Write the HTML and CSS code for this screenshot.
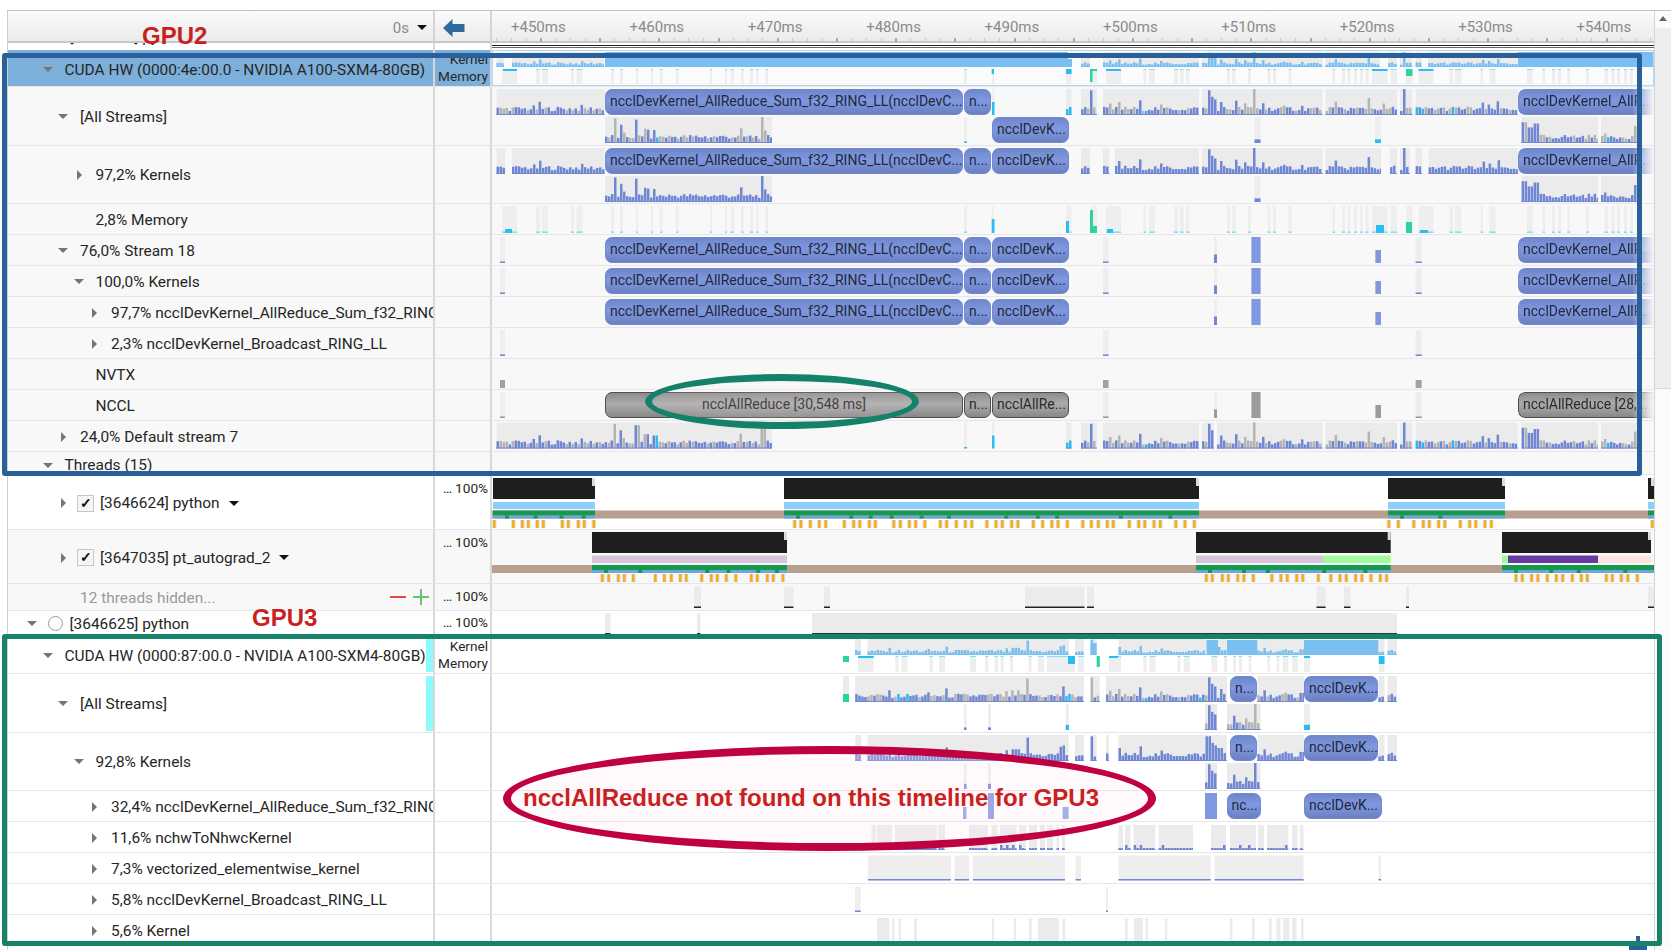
FILE: index.html
```html
<!DOCTYPE html>
<html lang="en">
<head>
    <meta charset="UTF-8">
    <title>Timeline</title>
    <link rel="stylesheet" href="styles.css">
</head>
<body>
    <div class="profiler">
        <div class="timeline">
            <div class="header">
                <div class="head-label">0s <i class="caret"></i></div>
                <div class="head-back">
                    <svg width="22" height="18" viewBox="0 0 22 18"><path d="M0 9 L9.5 0 V5 H21.5 V13 H9.5 V18 Z" fill="#2f6b9f"/></svg>
                </div>
                <div class="ruler">
                    <span>+450ms</span><span>+460ms</span><span>+470ms</span><span>+480ms</span><span>+490ms</span>
                    <span>+500ms</span><span>+510ms</span><span>+520ms</span><span>+530ms</span><span>+540ms</span>
                </div>
            </div>

            <div class="row row-peek">
                <div class="label lvl-root"><i class="tw down"></i><i class="radio"></i><span class="peek-text">[3646624] python</span></div>
                <div class="unit"></div>
                <div class="track"></div>
            </div>

            <div class="row row-device row-selected">
                <div class="label lvl-0"><i class="tw down"></i>CUDA HW (0000:4e:00.0 - NVIDIA A100-SXM4-80GB)</div>
                <div class="unit unit-two">Kernel<br>Memory</div>
                <div class="track" data-t="hw2"></div>
            </div>
            <div class="row row-tall">
                <div class="label lvl-1"><i class="tw down"></i>[All Streams]</div>
                <div class="unit"></div>
                <div class="track" data-t="all2"></div>
            </div>
            <div class="row row-tall">
                <div class="label lvl-2"><i class="tw right"></i>97,2% Kernels</div>
                <div class="unit"></div>
                <div class="track" data-t="kern2"></div>
            </div>
            <div class="row">
                <div class="label lvl-2"><i class="tw"></i>2,8% Memory</div>
                <div class="unit"></div>
                <div class="track" data-t="mem2"></div>
            </div>
            <div class="row">
                <div class="label lvl-1"><i class="tw down"></i>76,0% Stream 18</div>
                <div class="unit"></div>
                <div class="track" data-t="stream"></div>
            </div>
            <div class="row">
                <div class="label lvl-2"><i class="tw down"></i>100,0% Kernels</div>
                <div class="unit"></div>
                <div class="track" data-t="stream"></div>
            </div>
            <div class="row">
                <div class="label lvl-3"><i class="tw right"></i>97,7% ncclDevKernel_AllReduce_Sum_f32_RING_LL</div>
                <div class="unit"></div>
                <div class="track" data-t="reduce"></div>
            </div>
            <div class="row">
                <div class="label lvl-3"><i class="tw right"></i>2,3% ncclDevKernel_Broadcast_RING_LL</div>
                <div class="unit"></div>
                <div class="track" data-t="bcast"></div>
            </div>
            <div class="row">
                <div class="label lvl-2"><i class="tw"></i>NVTX</div>
                <div class="unit"></div>
                <div class="track" data-t="nvtx"></div>
            </div>
            <div class="row">
                <div class="label lvl-2"><i class="tw"></i>NCCL</div>
                <div class="unit"></div>
                <div class="track" data-t="nccl"></div>
            </div>
            <div class="row">
                <div class="label lvl-1"><i class="tw right"></i>24,0% Default stream 7</div>
                <div class="unit"></div>
                <div class="track" data-t="default"></div>
            </div>
            <div class="row row-threads">
                <div class="label lvl-0"><i class="tw down"></i>Threads (15)</div>
                <div class="unit"></div>
                <div class="track"></div>
            </div>

            <div class="row row-thread row-white">
                <div class="label lvl-1"><i class="tw right"></i><i class="check">&#10003;</i>[3646624] python <i class="caret caret-row"></i></div>
                <div class="unit unit-top"><span class="dots">...</span> 100%</div>
                <div class="track" data-t="python"></div>
            </div>
            <div class="row row-thread2">
                <div class="label lvl-1"><i class="tw right"></i><i class="check">&#10003;</i>[3647035] pt_autograd_2 <i class="caret caret-row"></i></div>
                <div class="unit unit-top unit-tight"><span class="dots">...</span> 100%</div>
                <div class="track" data-t="autograd"></div>
            </div>
            <div class="row row-hidden">
                <div class="label lvl-1"><i class="tw"></i><span class="muted">12 threads hidden...</span>
                    <span class="signs"><i class="sign sign-minus"></i><i class="sign sign-plus"></i></span>
                </div>
                <div class="unit unit-top unit-tight"><span class="dots">...</span> 100%</div>
                <div class="track" data-t="hidden"></div>
            </div>
            <div class="row row-process row-white">
                <div class="label lvl-root"><i class="tw down"></i><i class="radio"></i>[3646625] python</div>
                <div class="unit unit-top unit-tighter"><span class="dots">...</span> 100%</div>
                <div class="track" data-t="proc"></div>
            </div>

            <div class="row row-device row-white">
                <div class="label lvl-0 marked"><i class="tw down"></i>CUDA HW (0000:87:00.0 - NVIDIA A100-SXM4-80GB)</div>
                <div class="unit unit-two">Kernel<br>Memory</div>
                <div class="track" data-t="hw3"></div>
            </div>
            <div class="row row-tall row-white">
                <div class="label lvl-1 marked"><i class="tw down"></i>[All Streams]</div>
                <div class="unit"></div>
                <div class="track" data-t="all3"></div>
            </div>
            <div class="row row-tall row-white">
                <div class="label lvl-2"><i class="tw down"></i>92,8% Kernels</div>
                <div class="unit"></div>
                <div class="track" data-t="kern3"></div>
            </div>
            <div class="row row-white">
                <div class="label lvl-3"><i class="tw right"></i>32,4% ncclDevKernel_AllReduce_Sum_f32_RING_LL</div>
                <div class="unit"></div>
                <div class="track" data-t="reduce3"></div>
            </div>
            <div class="row row-white">
                <div class="label lvl-3"><i class="tw right"></i>11,6% nchwToNhwcKernel</div>
                <div class="unit"></div>
                <div class="track" data-t="nchw"></div>
            </div>
            <div class="row row-white">
                <div class="label lvl-3"><i class="tw right"></i>7,3% vectorized_elementwise_kernel</div>
                <div class="unit"></div>
                <div class="track" data-t="vect"></div>
            </div>
            <div class="row row-white">
                <div class="label lvl-3"><i class="tw right"></i>5,8% ncclDevKernel_Broadcast_RING_LL</div>
                <div class="unit"></div>
                <div class="track" data-t="bcast3"></div>
            </div>
            <div class="row row-white">
                <div class="label lvl-3"><i class="tw right"></i>5,6% Kernel</div>
                <div class="unit"></div>
                <div class="track" data-t="kernel3"></div>
            </div>
        </div>
        <div class="scrollbar">
            <i class="scroll-up"></i>
            <div class="scroll-thumb"></div>
        </div>
    </div>

    <svg class="pin" width="18" height="14" viewBox="0 0 18 14"><path d="M7 0 H11 V9 H18 V14 H0 V9 H7 Z" fill="#2a6099"/></svg>
    <div class="note note-gpu2">GPU2</div>
    <div class="note note-gpu3">GPU3</div>
    <div class="box box-blue"></div>
    <div class="box box-green"></div>
    <div class="ring ring-green"></div>
    <div class="ring ring-red"><span class="ring-text">ncclAllReduce not found on this timeline for GPU3</span></div>

    <script src="script.js"></script>
</body>
</html>
```

FILE: styles.css
```css
* { box-sizing: border-box; }
html, body { margin: 0; height: 950px; overflow: hidden; background: #fff; }
body { font-family: Roboto, "Liberation Sans", sans-serif; font-size: 15.45px; color: #262626; }
i { font-style: normal; }

.profiler { display: flex; margin: 10px 0 0 7px; width: 1664px; height: 940px; border-top: 1px solid #c4c4c4; }
.timeline { width: 1647px; flex: none; border-left: 1px solid #cfcfcf; overflow: hidden; }

.header { display: grid; grid-template-columns: 427px 57px 1fr; height: 32px; background: linear-gradient(#fbfbfb, #ebebeb); border-bottom: 2px solid #c8c8c8; }
.head-label { display: flex; align-items: center; justify-content: flex-end; gap: 8px; padding-right: 6px; color: #8a8a8a; font-size: 15px; border-right: 2px solid #d4d4d4; }
.head-back { display: flex; align-items: center; padding-left: 8px; border-right: 2px solid #d4d4d4; }
.ruler {
    display: flex; padding-left: 19px; color: #8a8a8a; font-size: 15px; line-height: 33px;
    background:
        repeating-linear-gradient(90deg, #a8a8a8 0 2px, transparent 2px 59.2px) 48px 27px / 100% 4px no-repeat,
        repeating-linear-gradient(90deg, #c8c8c8 0 1px, transparent 1px 14.8px) 4px 27px / 100% 3px no-repeat;
}
.ruler span { width: 118.4px; flex: none; }

.caret { display: inline-block; width: 0; height: 0; border: 5px solid transparent; border-top: 5.5px solid #111; border-bottom: 0; }
.caret-row { margin-left: 9px; vertical-align: 1px; }

.row { display: grid; grid-template-columns: 427px 57px 1fr; height: 31px; background: #f8f8f8; border-bottom: 1px solid #e6e6e6; }
.row-white { background: #fff; }
.row-tall { height: 58.5px; }
.row-device { height: 37px; }
.row-threads { height: 23px; overflow: hidden; }
.row-thread { height: 55px; }
.row-thread2 { height: 54px; }
.row-hidden { height: 27px; }
.row-process { height: 26px; }
.row-peek { height: 7px; overflow: hidden; background: #fff; border-bottom: 0; }

.label { position: relative; display: flex; align-items: center; padding-top: 2px; white-space: nowrap; overflow: hidden; border-right: 2px solid #d8d8d8; }
.lvl-root { padding-left: 19px; }
.lvl-0 { padding-left: 35px; }
.lvl-1 { padding-left: 50.5px; }
.lvl-2 { padding-left: 66px; }
.lvl-3 { padding-left: 81.5px; }
.row-selected .label { padding-top: 4px; }
.row-process .label { padding-top: 0; }
.row-threads .label { align-items: flex-start; padding-top: 4px; }
.row-threads .tw { margin-top: 5px; }

.tw { flex: none; position: relative; width: 21.5px; height: 10px; }
.tw.down::before { content: ""; position: absolute; left: -0.5px; top: 2px; border: 5px solid transparent; border-top: 5.5px solid #757575; border-bottom: 0; }
.tw.right::before { content: ""; position: absolute; left: 2.5px; top: 0; border: 5px solid transparent; border-left: 5.5px solid #757575; border-right: 0; }

.check { flex: none; width: 17px; height: 17px; margin-right: 6px; margin-left: -3px; background: #f6f6f6; border: 1px solid #c6c6c6; color: #111; font-size: 14px; font-weight: 700; line-height: 15px; text-align: center; }
.radio { flex: none; width: 15px; height: 15px; margin-right: 7px; border: 1.5px solid #999; border-radius: 50%; background: #fff; margin-left: -1px; }
.muted { color: #9a9a9a; }
.signs { position: absolute; left: 382px; top: 12px; display: flex; gap: 7px; }
.sign { position: relative; display: block; width: 16px; height: 2px; background: #e04a44; }
.sign-plus { background: #6cc26c; }
.sign-plus::after { content: ""; position: absolute; left: 7px; top: -7px; width: 2px; height: 16px; background: #6cc26c; }
.row-peek .label { align-items: flex-start; padding-top: 0; }
.row-peek .tw, .row-peek .radio, .row-peek .peek-text { margin-top: -15px; }

.unit { border-right: 2px solid #d8d8d8; font-size: 13.6px; text-align: right; padding-right: 2px; white-space: nowrap; }
.dots { letter-spacing: -0.7px; }
.unit-top { padding-top: 5px; line-height: 17px; }
.unit-tight { padding-top: 4px; }
.unit-tighter { padding-top: 3px; }
.unit-two { line-height: 16.5px; padding-top: 1px; }

.row-selected .label, .row-selected .unit { background: #7cafd9; }
.row-selected .track { outline: 1px solid #b6d5f2; outline-offset: -1px; background: #fbfbfb; }

.marked::after { content: ""; position: absolute; right: 0; top: 2px; bottom: 1px; width: 7px; background: #8dfbfb; }

.track { position: relative; overflow: hidden; }
.row-peek .track { border-top: 1px solid #222; margin-top: 2px; height: 3px; border-bottom: 1px solid #666; }
.track svg { position: absolute; left: 0; top: 0; width: 100%; height: 100%; }

.chip {
    position: absolute; display: block; height: 26px; padding: 0 4px; font-size: 14px; line-height: 23px; white-space: nowrap; overflow: hidden;
    color: #23283a; background: linear-gradient(#6f86ca, #7f98e0 45%, #6b80c2); border: 1px solid #7189cf; border-radius: 7px;
}
.chip-grey { background: linear-gradient(#8c8c8c, #ababab 45%, #888); border-color: #4e4e4e; color: #2a2a2a; }
.chip-center { text-align: center; }
.chip-fade { border-right: 0; border-radius: 7px 0 0 7px; -webkit-mask-image: linear-gradient(90deg, #000 84%, transparent); mask-image: linear-gradient(90deg, #000 84%, transparent); }

.scrollbar { position: relative; flex: 1; background: #fbfbfb; border-left: 1px solid #d4d4d4; }
.scroll-up { position: absolute; left: 4px; top: 5px; border: 4.5px solid transparent; border-bottom: 5px solid #666; border-top: 0; }
.scroll-thumb { position: absolute; left: 0; right: 0; top: 17px; height: 361px; background: #ededed; border-bottom: 1px solid #d8d8d8; }

.note { position: absolute; color: #c9211e; font-family: "Liberation Sans", sans-serif; font-weight: 700; font-size: 24px; line-height: 28px; }
.note-gpu2 { left: 142px; top: 22px; }
.note-gpu3 { left: 252px; top: 604px; }

.box { position: absolute; border-style: solid; border-width: 5.5px; border-radius: 3px; }
.box-blue { left: 2px; top: 53px; width: 1640px; height: 423px; border-color: #2a6099; }
.box-green { left: 2px; top: 634px; width: 1660px; height: 312px; border-color: #17826a; }

.ring { position: absolute; border-style: solid; border-radius: 50%; }
.ring-green { left: 645px; top: 374px; width: 274px; height: 55px; border-width: 7px; border-color: #14826a; background: rgba(255, 235, 235, .12); }
.ring-red { left: 503px; top: 746px; width: 653px; height: 105px; border-width: 8px; border-color: #bf0041; background: rgba(255, 228, 236, .22); }
.ring-text { position: absolute; left: 12px; top: 29px; color: #c9211e; font-family: "Liberation Sans", sans-serif; font-weight: 700; font-size: 24px; line-height: 30px; white-space: nowrap; }
.pin { position: absolute; left: 1629px; top: 936px; }
```

FILE: script.js
```js
// draws the timeline tracks, all x values are page pixels
const X0 = 492;
const NS = 'http://www.w3.org/2000/svg';
const BLUE = '#7088d4', GREY = '#b4b4b4', CYAN = '#2bbdf2', SKY = '#79bff2', TEAL = '#2bd3a4', BLOCK = '#ebebeb', TICK = '#86dff0';

// tall peaks seen in the histograms
const SPIKES = {615: .95, 620: .7, 637: .9, 646: .55, 655: .5, 763: 1, 1090: .95, 1255: 1, 1369: .65, 1404: 1, 1524: .8, 1530: .6, 1536: .75, 1220: .5, 1216: .6, 1264: .45, 1634: .65, 1100: .6, 1118: .5, 1208: .95, 1212: .7, 1235: .55, 1245: .45, 1302: .35, 1027: .9, 1062: .55, 1063: .6, 1017: .45};

function rnd(n) {
    let s = Math.sin(n * 12.9898) * 43758.5453;
    return s - Math.floor(s);
}

function rect(t, x0, x1, y, h, fill) {
    let r = document.createElementNS(NS, 'rect');
    r.setAttribute('x', x0 - X0);
    r.setAttribute('y', y);
    r.setAttribute('width', x1 - x0);
    r.setAttribute('height', h);
    r.setAttribute('fill', fill);
    t.svg.appendChild(r);
}

function barColor(kind, x) {
    if (kind == 'kernel' || kind == 'low') return BLUE;
    if (kind == 'light') return SKY;
    let c = rnd(x * 3.1);
    if (c < .38) return GREY;
    if (c < .42) return CYAN;
    return BLUE;
}

// grey block with a little histogram in it
function hist(t, x0, x1, y, h, kind) {
    rect(t, x0, x1, y, h, BLOCK);
    for (let x = x0; x < x1 - 1; x += 3) {
        let key = Math.round(x / 3);
        let r = rnd(key);
        let f = .15 + .18 * r;
        if (r > .93) f = .35 + .22 * rnd(key + 7);
        if (kind == 'low') {
            f = r > .85 ? .2 : .08;
        } else {
            for (let s in SPIKES) {
                if (Math.abs(x + 1 - s) < 1.6) f = SPIKES[s];
            }
        }
        rect(t, x, Math.min(x + 2.5, x1), y + h - f * h, f * h, barColor(kind, key));
    }
    rect(t, x0, x1, y + h - 1, 1, kind == 'light' ? SKY : BLUE);
}

function hists(t, list, y, h, kind) {
    list.forEach(b => hist(t, b[0], b[1], y, h, kind));
}

// thin empty block, with a small coloured part at the bottom
function stubs(t, list, y, h, color, part) {
    list.forEach(b => {
        rect(t, b[0], b[1], y, h, '#eeeeee');
        rect(t, b[0], b[1], y + h * (1 - part), h * part, color);
    });
}

function solid(t, list, y, h, color) {
    list.forEach(b => rect(t, b[0], b[1], y, h, color));
}

function chip(t, x0, x1, y, text, cls) {
    let c = document.createElement('span');
    c.className = 'chip ' + (cls || '');
    c.style.left = (x0 - X0) + 'px';
    c.style.top = y + 'px';
    c.style.width = (x1 - x0) + 'px';
    c.textContent = text;
    t.el.appendChild(c);
}

const LONG = 'ncclDevKernel_AllReduce_Sum_f32_RING_LL(ncclDevC...';
const CUT = 'ncclDevKernel_AllR...';
const SHORT = 'ncclDevK...';

function blueChips(t, y) {
    chip(t, 605, 963, y, LONG);
    chip(t, 964, 991, y, 'n...', 'chip-center');
    chip(t, 992, 1069, y, SHORT);
    chip(t, 1518, 1654, y, CUT, 'chip-fade');
}

const MEM2 = [[502,517],[536,540],[542,548],[571,574],[576.5,582.5],[611,614],[620,623],[636,638],[651,653],[660,662.5],[676,678.6],[710,712],[725,727],[730.7,734],[741,743.7],[750,753],[756,758.6],[765.5,768],[964,967],[991.7,994],[1066,1071.6],
    [1090,1097],[1106,1121],[1143.5,1146],[1149,1155],[1174,1178],[1180,1183.7],[1186,1189.4],[1227,1230],[1232,1235.7],[1248,1251],[1267.5,1270.5],[1273,1276],[1288.5,1291.6],[1332.5,1335],[1342,1345],[1347.5,1350.5],[1354,1357],[1360,1363],[1365.5,1368.5],[1372,1387.6],[1390.7,1397],[1406,1412.5],[1418.6,1433.5],[1449.6,1453],[1455,1461.5],[1480.6,1483],[1489.4,1495.6],
    [1527,1532.7],[1542.6,1545],[1552,1555],[1558,1561],[1567.5,1570],[1586,1589],[1604.6,1608],[1611.5,1614.6],[1617,1620],[1624,1627],[1630,1633]];

const HW2_UP = [[496.5,504],[512,604],[1081,1090],[1103,1199],[1202,1322.6],[1325.6,1380],[1388,1397],[1400,1412.5],[1415.6,1422],[1428,1517.8]];
const ALL2_L1 = [[496.5,604.5],[1081,1097],[1103,1199],[1202,1322.6],[1325.6,1397],[1400,1412.5],[1415.6,1517.8]];
const KERN2_L1 = [[496.5,505],[512,604.5],[1081,1090],[1103,1109.4],[1115,1199],[1202,1322.6],[1325.6,1381],[1390,1397],[1400,1410],[1415.6,1422],[1428.6,1517.8]];
const RIGHT_L2 = [[1521.6,1598],[1601,1637]];

function orangeTicks(t, list, y) {
    list.forEach(x => {
        rect(t, x - 1, x + 3.6, y, 8, '#e3e3e3');
        rect(t, x, x + 2.6, y, 8, '#f6ad1e');
    });
}

function threadBand(t, x0, x1, y) {
    rect(t, x0, x1, y, 5, '#15994f');
    rect(t, x0, x1, y + 5, 3, '#6ea6d8');
    for (let x = x0 + 12; x < x1 - 8; x += 18 + rnd(x) * 50) {
        rect(t, x, x + 4, y + 5, 3, '#15994f');
    }
}

function blackBlock(t, x0, x1, y) {
    rect(t, x0, x1, y, 21, '#1e1e1e');
    rect(t, x1 - 3, x1, y, 8, '#dcdcdc');
}

const TRACKS = {
    hw2(t) {
        rect(t, 605, 1068, 2, 15, SKY);
        rect(t, 1518, 1653, 2, 15, SKY);
        hists(t, HW2_UP, 2, 15, 'light');
        rect(t, 1068, 1072, 9, 8, SKY);
        stubs(t, MEM2, 19, 15, TICK, 0);
        solid(t, MEM2, 19, 1, TICK);
        solid(t, [[503,517],[1106,1121],[1372,1387.6],[1418.6,1433.5]], 19, 2, CYAN);
        solid(t, [[991.7,994],[1066,1071.6]], 19, 5, CYAN);
        solid(t, [[1090,1092.5]], 19, 13, TEAL);
        solid(t, [[1090,1097]], 19, 2, TEAL);
        solid(t, [[1406,1412.5]], 19, 7, TEAL);
    },
    all2(t) {
        hists(t, ALL2_L1, 2, 26, 'mix');
        hist(t, 605, 772, 30, 26, 'mix');
        stubs(t, [[1254.5,1260.6]], 30, 26, BLUE, .14);
        stubs(t, [[1375,1381]], 30, 26, CYAN, .14);
        stubs(t, [[964,967]], 30, 26, CYAN, .06);
        stubs(t, [[992,994.5]], 2, 26, CYAN, .5);
        hist(t, 1066, 1071.5, 2, 26, 'mix');
        hists(t, RIGHT_L2, 30, 26, 'mix');
        blueChips(t, 2);
        t.el.querySelector('.chip:nth-of-type(3)').style.top = '30px';
    },
    kern2(t) {
        hists(t, KERN2_L1, 2, 26, 'kernel');
        hist(t, 605, 772, 30, 26, 'kernel');
        stubs(t, [[1254.5,1260.6]], 30, 26, BLUE, .14);
        hists(t, RIGHT_L2, 30, 26, 'kernel');
        blueChips(t, 2);
    },
    mem2(t) {
        stubs(t, MEM2, 2, 27, TICK, .06);
        solid(t, [[1376,1384]], 21, 8, CYAN);
        solid(t, [[1107,1113]], 25, 4, CYAN);
        solid(t, [[505,512]], 25, 4, CYAN);
        solid(t, [[1420,1428]], 26, 3, CYAN);
        solid(t, [[991.7,994.5]], 15, 14, CYAN);
        solid(t, [[1066,1069]], 17, 12, CYAN);
        solid(t, [[1090,1093]], 6, 23, TEAL);
        solid(t, [[1093,1097]], 22, 7, TEAL);
        solid(t, [[1406,1412]], 18, 11, TEAL);
    },
    stream(t) {
        blueChips(t, 2);
        stubs(t, [[500,505],[1103,1108.6],[1415.6,1421.7]], 2, 26, BLUE, .06);
        stubs(t, [[1214,1217]], 2, 26, BLUE, .33);
        solid(t, [[1251.4,1260.6]], 2, 26, '#7f98e0');
        stubs(t, [[1375.4,1381]], 15, 13, '#7f98e0', 1);
    },
    reduce(t) {
        blueChips(t, 2);
        stubs(t, [[1214,1217]], 2, 26, BLUE, .33);
        solid(t, [[1251.4,1260.6]], 2, 26, '#7f98e0');
        stubs(t, [[1375.4,1381]], 15, 13, '#7f98e0', 1);
    },
    bcast(t) {
        stubs(t, [[500,505],[1103,1108.6],[1415.6,1421.7]], 2, 26, BLUE, .06);
    },
    nvtx(t) {
        solid(t, [[500,505],[1103,1108.6],[1415.6,1421.7]], 21, 8, '#a2a2a2');
    },
    nccl(t) {
        chip(t, 605, 963, 2, 'ncclAllReduce [30,548 ms]', 'chip-grey chip-center');
        chip(t, 964, 991, 2, 'n...', 'chip-grey chip-center');
        chip(t, 992, 1069, 2, 'ncclAllRe...', 'chip-grey');
        chip(t, 1518, 1654, 2, 'ncclAllReduce [28,...', 'chip-grey chip-fade');
        stubs(t, [[500,505],[1103,1108.6],[1415.6,1421.7]], 2, 26, '#9a9a9a', .06);
        stubs(t, [[1214,1217]], 2, 26, '#9a9a9a', .33);
        solid(t, [[1251.4,1260.6]], 2, 26, '#9c9c9c');
        solid(t, [[1375.4,1381]], 15, 13, '#9c9c9c');
    },
    default(t) {
        hists(t, [[496.5,772],[1081,1097],[1103,1199],[1202,1214],[1217,1322.6],[1325.6,1397],[1400,1412.5],[1415.6,1517.8],[1521.6,1598],[1601,1637]], 1.5, 26, 'mix');
        stubs(t, [[964,967]], 1.5, 26, CYAN, .06);
        stubs(t, [[992,994.5]], 1.5, 26, CYAN, .5);
        hist(t, 1066, 1071.5, 1.5, 26, 'mix');
    },
    python(t) {
        [[493,595],[784,1199],[1388,1505],[1648,1654]].forEach(b => {
            blackBlock(t, b[0], b[1], 3);
            rect(t, b[0], b[1], 27, 7, '#8bcffa');
        });
        rect(t, 492, 1654, 35.5, 8, '#b7a08f');
        [[493,595],[784,1199],[1388,1505],[1648,1654]].forEach(b => threadBand(t, b[0], b[1], 35.5));
        orangeTicks(t, [493,512,521,527,536,542,561,567,577,583,592.5,793.4,799.6,809,818,824.4,843,852.4,858.5,868,874,892.5,899,908,914.4,923.6,939,945.4,955,964,970.5,985.6,994.7,1001,1010.4,1016.6,1032,1041.4,1050.6,1056.7,1066,1081.5,1090,1097,1106,1112,1128,1137.4,1143.5,1152.7,1159,1174.5,1183.7,1193,1387.6,1397,1412.5,1422,1428,1437.4,1443.5,1459,1468.4,1474.5,1483.7,1490,1651], 45);
    },
    autograd(t) {
        [[592,787],[1196,1390.7],[1502,1651]].forEach(b => blackBlock(t, b[0], b[1], 2));
        solid(t, [[592,787],[1196,1323]], 25.5, 7.5, '#d9c2dc');
        solid(t, [[1323,1390.7],[1502,1508]], 25.5, 7.5, '#9ffb9b');
        solid(t, [[1508,1598]], 25.5, 7.5, '#6b3aa0');
        solid(t, [[1598,1651]], 25.5, 7.5, '#fde3e0');
        rect(t, 492, 1654, 35, 8, '#b7a08f');
        [[592,787],[1196,1390.7],[1502,1654]].forEach(b => threadBand(t, b[0], b[1], 35));
        orangeTicks(t, [601,607.4,617,623,632,654,663,670,679,685,700.4,710,716,725,734.5,750,756,766,772,781.6,1205,1211,1221,1227,1236.5,1242.6,1252,1270.5,1279.7,1286,1295.4,1301.5,1317,1329.5,1338.7,1345,1354.4,1360.5,1369.7,1379,1385.3,1514.7,1521,1530.4,1536.5,1546,1555,1561.4,1571,1580,1586,1605,1611,1620,1626.5,1636], 44);
    },
    hidden(t) {
        [[694,701],[784,793.4],[824,830],[1025,1084.5],[1087,1094],[1316.5,1325.6],[1344,1350.5],[1406,1409],[1648,1654]].forEach(b => {
            rect(t, b[0], b[1], 2.5, 21.5, BLOCK);
            rect(t, b[0], b[1], 22.5, 1.5, '#222');
        });
    },
    proc(t) {
        solid(t, [[605,610.5],[697,700.5],[812,1397]], 2, 21, BLOCK);
        solid(t, [[605,610.5],[697,700.5],[812,1397]], 22, 1.5, '#333');
    },
    hw3(t) {
        hists(t, [[855,861],[867.5,1069],[1075,1084],[1090.6,1096.7],[1118.5,1206.5],[1218,1227],[1257.4,1304],[1378.4,1384.5],[1387.5,1397]], 2, 16, 'light');
        solid(t, [[1206.5,1218],[1227,1257.4],[1304,1378.4]], 3, 15, SKY);
        solid(t, [[1090.6,1096.7]], 6, 12, SKY);
        let mem = [[858,873.6],[895.4,898.5],[901.5,907.6],[929.5,933],[939,945],[970,976],[985,988.4],[994.5,998],[1000.6,1003.7],[1010,1013],[1028.6,1031.6],[1038,1044],[1047,1075],[1078,1084],[1109,1121],[1143.4,1146.4],[1149.5,1155.6],[1177.4,1180.5],[1183.6,1189.7],[1211.5,1217.3],[1224,1227],[1233.3,1236],[1239,1242],[1248.6,1251.3],[1267.4,1270],[1276.6,1279.3],[1282.7,1288.4],[1292,1298],[1304,1310],[1378.8,1384.5]];
        stubs(t, mem, 19, 16, TICK, 0);
        solid(t, mem, 19, 1, TICK);
        solid(t, [[843,849]], 19, 6, TEAL);
        solid(t, [[1096.7,1099.8]], 19, 11, TEAL);
        solid(t, [[858,873.6],[1109,1118],[1304,1310]], 19, 2, CYAN);
        solid(t, [[1068,1075],[1378.8,1384.5]], 19, 8, CYAN);
    },
    all3(t) {
        hists(t, [[855.2,1084],[1090.6,1099.8],[1106,1227],[1257.4,1304],[1378.4,1384.5],[1387.5,1397]], 2, 26, 'mix');
        solid(t, [[843,849]], 2, 26, BLOCK);
        solid(t, [[843,849]], 20, 8, TEAL);
        hists(t, [[1205,1217],[1227,1260.5]], 30, 26, 'mix');
        stubs(t, [[964,966.5],[988,991]], 30, 26, BLUE, .1);
        stubs(t, [[1065.7,1069],[1304,1310]], 30, 26, CYAN, .2);
        chip(t, 1230, 1257.4, 2, 'n...', 'chip-center');
        chip(t, 1304, 1378.4, 2, SHORT);
    },
    kern3(t) {
        hists(t, [[855.2,861.3],[867.5,1068.8],[1075,1084],[1090.6,1096.7],[1106,1109],[1118.5,1226.8],[1257.4,1304],[1378.4,1384.5],[1387.5,1397]], 2, 26, 'kernel');
        hists(t, [[1205,1217],[1227,1260.5]], 30, 26, 'kernel');
        stubs(t, [[964,966.5],[988,991]], 30, 26, BLUE, .2);
        chip(t, 1230, 1257.4, 2, 'n...', 'chip-center');
        chip(t, 1304, 1378.4, 2, SHORT);
    },
    reduce3(t) {
        solid(t, [[1205,1217]], 2, 26, '#7f98e0');
        solid(t, [[963,966.5],[1062.6,1068.6]], 16, 12, '#8aa2e6');
        solid(t, [[988,994]], 2, 26, '#7f98e0');
        chip(t, 1226.5, 1260.7, 2, 'nc...', 'chip-center');
        chip(t, 1304, 1381.7, 2, SHORT);
    },
    nchw(t) {
        hists(t, [[871.6,876],[877,892],[895,936.7],[938.3,945],[969,988],[991.5,997.5],[1000,1016.5],[1019,1026],[1029,1037],[1040,1045],[1047,1053],[1056.6,1059],[1062,1065],[1118.5,1123],[1125,1130.5],[1133.7,1155.4],[1158.7,1193],[1211,1226],[1230,1256],[1258,1264],[1267,1288.4],[1292,1297.6],[1299.8,1303.6]], 3, 25, 'low');
    },
    vect(t) {
        stubs(t, [[867.8,950.8],[954.6,969],[973,1065],[1075.6,1081],[1118.5,1210.8],[1214.6,1303.6],[1378.5,1381]], 2.5, 25, BLUE, .06);
    },
    bcast3(t) {
        stubs(t, [[855,860.7],[1106,1108]], 3, 25, BLUE, .06);
    },
    kernel3(t) {
        solid(t, [[877,889.5],[892,894.4],[898.7,901],[914,917],[992,994],[1013.8,1016],[1029,1031.7],[1038,1058.8],[1062.6,1065.3],[1125,1127.7],[1134,1143],[1145.6,1148],[1165,1167.3],[1229.8,1232.5],[1252,1254.7],[1269,1271.7],[1276.5,1280.6],[1283,1289.5],[1292,1296.6],[1301,1303.6]], 3, 27, BLOCK);
    }
};

document.querySelectorAll('.track[data-t]').forEach(el => {
    let svg = document.createElementNS(NS, 'svg');
    el.appendChild(svg);
    TRACKS[el.dataset.t]({ el: el, svg: svg });
});
```
